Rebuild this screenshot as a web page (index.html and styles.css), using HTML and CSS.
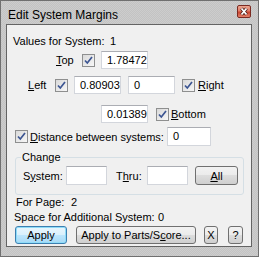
FILE: index.html
```html
<!DOCTYPE html>
<html>
<head>
  <title>Edit System Margins</title>
  <link rel="stylesheet" href="styles.css">
</head>
<body>
<div class="window">
  <div class="titlebar">
    <span class="title">Edit System Margins</span>
    <span class="close">
      <svg viewBox="0 0 14 13" width="14" height="13">
        <path d="M4.5 3.5 L9.5 9.5 M9.5 3.5 L4.5 9.5" stroke="#4a1a14" stroke-width="3.4" fill="none"/>
        <path d="M4.5 3.5 L9.5 9.5 M9.5 3.5 L4.5 9.5" stroke="#fff" stroke-width="1.8" fill="none"/>
      </svg>
    </span>
  </div>
  <div class="client">
    <div class="line line-values"><span class="caption caption-values">Values for System:</span><span>1</span></div>

    <div class="row row-top">
      <span class="lbl lbl-top"><u>T</u>op</span>
      <span class="check"><svg viewBox="0 0 11 11" width="11" height="11"><path d="M2 5.5 L4.3 8 L9 2" fill="none" stroke="#3c5592" stroke-width="1.7"/></svg></span>
      <span class="edit edit-top">1.78472</span>
    </div>

    <div class="row row-left">
      <span class="lbl lbl-left"><u>L</u>eft</span>
      <span class="check"><svg viewBox="0 0 11 11" width="11" height="11"><path d="M2 5.5 L4.3 8 L9 2" fill="none" stroke="#3c5592" stroke-width="1.7"/></svg></span>
      <span class="edit edit-left">0.80903</span>
      <span class="edit edit-right">0</span>
      <span class="check check-right"><svg viewBox="0 0 11 11" width="11" height="11"><path d="M2 5.5 L4.3 8 L9 2" fill="none" stroke="#3c5592" stroke-width="1.7"/></svg></span>
      <span class="lbl lbl-right"><u>R</u>ight</span>
    </div>

    <div class="row row-bottom">
      <span class="edit">0.01389</span>
      <span class="check check-bottom"><svg viewBox="0 0 11 11" width="11" height="11"><path d="M2 5.5 L4.3 8 L9 2" fill="none" stroke="#3c5592" stroke-width="1.7"/></svg></span>
      <span class="lbl lbl-bottom"><u>B</u>ottom</span>
    </div>

    <div class="row row-distance">
      <span class="check"><svg viewBox="0 0 11 11" width="11" height="11"><path d="M2 5.5 L4.3 8 L9 2" fill="none" stroke="#3c5592" stroke-width="1.7"/></svg></span>
      <span class="lbl lbl-distance"><u>D</u>istance between systems:</span>
      <span class="edit edit-distance">0</span>
    </div>

    <fieldset class="group">
      <legend>Change</legend>
      <div class="row row-change">
        <span class="lbl lbl-system">S<u>y</u>stem:</span>
        <span class="edit edit-small"></span>
        <span class="lbl lbl-thru">T<u>h</u>ru:</span>
        <span class="edit edit-small"></span>
        <span class="btn btn-all"><u>A</u>ll</span>
      </div>
    </fieldset>

    <div class="line line-page"><span class="caption caption-page">For Page:</span><span>2</span></div>
    <div class="line line-space"><span class="caption caption-space">Space for Additional System:</span><span>0</span></div>

    <div class="row row-buttons">
      <span class="btn btn-default btn-apply">Apply</span>
      <span class="btn btn-parts">Apply to Parts/S<u>c</u>ore...</span>
      <span class="btn btn-x">X</span>
      <span class="btn btn-help">?</span>
    </div>
  </div>
</div>
</body>
</html>
```

FILE: styles.css
```css
body {
  margin: 0;
  padding: 0;
  background: #fff;
}

.window {
  width: 259px;
  height: 257px;
  box-sizing: border-box;
  border: 1px solid #707070;
  background: repeating-conic-gradient(#c3c3c3 0 25%, #cdcdcd 0 50%) 0 0 / 2px 2px;
  font: 11px/13px "Liberation Sans", Arial, sans-serif;
  color: #000;
}

.titlebar {
  display: flex;
  height: 23px;
  padding: 0 7px;
}

.title {
  font-size: 12px;
  line-height: 14px;
  padding-top: 7px;
}

.close {
  display: flex;
  margin-left: auto;
  margin-top: 4px;
  width: 14px;
  height: 13px;
  box-sizing: border-box;
  border: 1px solid #7b2a22;
  border-radius: 2px;
  background: linear-gradient(#eba590 0%, #e37d68 45%, #c8442f 55%, #e4826a 100%);
}

.close svg {
  margin: -1px;
}

.client {
  margin: 0 6px 0 5px;
  height: 223px;
  box-sizing: border-box;
  border: 1px solid #646464;
  background: #f0f0f0;
  padding-top: 10px;
}

.line {
  display: flex;
  height: 13px;
}

.line-values {
  padding-left: 6px;
}

.caption-values {
  width: 97px;
}

.line-page {
  margin-top: 1px;
  padding-left: 9px;
}

.caption-page {
  width: 55px;
}

.line-space {
  margin-top: 2px;
  padding-left: 7px;
}

.caption-space {
  width: 144px;
}

.row {
  display: flex;
  align-items: center;
  height: 18px;
}

.lbl {
  padding-top: 1px;
}

u {
  text-underline-offset: 1px;
}

.check {
  display: flex;
  width: 13px;
  height: 13px;
  box-sizing: border-box;
  border: 1px solid #8e8f8f;
  background: linear-gradient(135deg, #d9d9d9, #f7f7f7);
}

.edit {
  width: 47px;
  height: 100%;
  box-sizing: border-box;
  border: 1px solid #d3d6dc;
  border-top-color: #abadb3;
  background: #fff;
  padding-left: 5px;
  line-height: 16px;
}

.row-top {
  margin-top: 3px;
  padding-left: 49px;
}

.lbl-top {
  width: 26px;
}

.edit-top {
  margin-left: 6px;
}

.row-left {
  margin-top: 7px;
  padding-left: 21px;
}

.lbl-left {
  width: 27px;
}

.edit-left {
  margin-left: 6px;
}

.edit-right {
  margin-left: 7px;
}

.check-right {
  margin-left: 7px;
}

.lbl-right {
  margin-left: 3px;
}

.row-bottom {
  margin-top: 11px;
  padding-left: 94px;
}

.check-bottom {
  margin-left: 8px;
}

.lbl-bottom {
  margin-left: 2px;
}

.row-distance {
  margin-top: 4px;
  height: 19px;
  padding-left: 8px;
}

.lbl-distance {
  width: 137px;
  margin-left: 2px;
}

.edit-distance {
  width: 44px;
  line-height: 17px;
}

.group {
  margin: 5px 0 0 8px;
  width: 229px;
  box-sizing: border-box;
  border: 1px solid #d5dfe5;
  border-radius: 3px;
  padding: 2px 0 9px 7px;
}

.group legend {
  padding: 0 1px;
  margin-left: -2px;
  line-height: 13px;
}

.row-change {
  height: 19px;
}

.lbl-system {
  width: 43px;
}

.edit-small {
  width: 41px;
}

.lbl-thru {
  width: 31px;
  margin-left: 9px;
}

.btn {
  display: flex;
  align-items: center;
  justify-content: center;
  height: 100%;
  box-sizing: border-box;
  border: 1px solid #707070;
  border-radius: 3px;
  background: linear-gradient(#f2f2f2 0%, #ebebeb 50%, #dddddd 50%, #cfcfcf 100%);
  padding-top: 1px;
}

.btn-all {
  width: 43px;
  margin-left: 7px;
}

.btn-default {
  border-color: #3c7fb1;
  box-shadow: inset 0 0 0 1px #8fdcf8;
  background: linear-gradient(#eaf6fd 0%, #d9f0fc 50%, #bee6fd 50%, #a7d9f5 100%);
}

.row-buttons {
  margin-top: 2px;
  padding-left: 8px;
}

.btn-apply {
  width: 52px;
}

.btn-parts {
  width: 120px;
  margin-left: 9px;
}

.btn-x {
  width: 14px;
  margin-left: 8px;
}

.btn-help {
  width: 15px;
  margin-left: 10px;
}
```
